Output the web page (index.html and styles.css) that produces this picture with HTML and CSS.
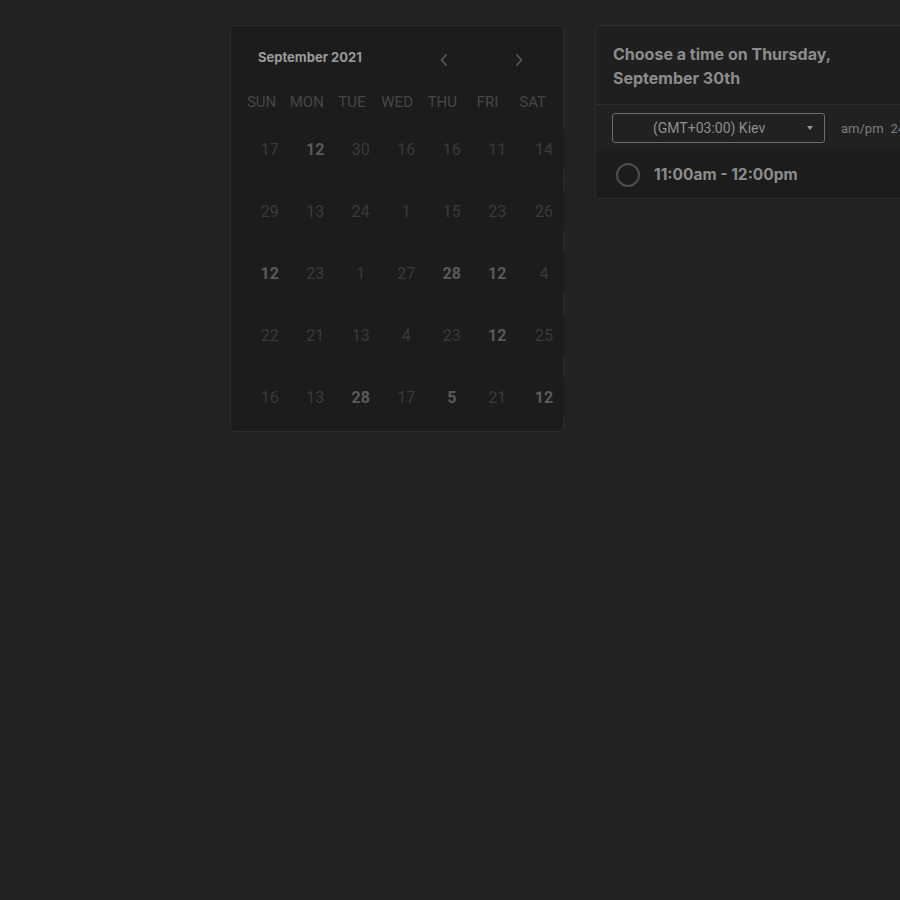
FILE: index.html
```html
<!DOCTYPE html>
<html>
<head>
<meta charset="utf-8">
<link rel="stylesheet" href="styles.css">
</head>
<body>
<div class="page">
  <div class="calendar">
    <div class="cal-head">
      <span class="month">September 2021</span>
      <span class="nav prev"><svg width="10" height="14" viewBox="0 0 10 14"><path d="M7.5 1.5 L2.5 7 L7.5 12.5" fill="none" stroke="#5a5a5a" stroke-width="1.6"/></svg></span>
      <span class="nav next"><svg width="10" height="14" viewBox="0 0 10 14"><path d="M2.5 1.5 L7.5 7 L2.5 12.5" fill="none" stroke="#5a5a5a" stroke-width="1.6"/></svg></span>
    </div>
    <div class="dow">
      <span>SUN</span><span>MON</span><span>TUE</span><span>WED</span><span>THU</span><span>FRI</span><span>SAT</span>
    </div>
    <div class="dates">
      <span>17</span><span class="b">12</span><span>30</span><span>16</span><span>16</span><span>11</span><span>14</span>
      <span>29</span><span>13</span><span>24</span><span>1</span><span>15</span><span>23</span><span>26</span>
      <span class="b">12</span><span>23</span><span>1</span><span>27</span><span class="b">28</span><span class="b">12</span><span>4</span>
      <span>22</span><span>21</span><span>13</span><span>4</span><span>23</span><span class="b">12</span><span>25</span>
      <span>16</span><span>13</span><span class="b">28</span><span>17</span><span class="b">5</span><span>21</span><span class="b">12</span>
    </div>
  </div>
  <div class="times">
    <div class="times-head"><div class="title">Choose a time on Thursday, September 30th</div></div>
    <div class="controls">
      <div class="select"><span class="select-text">(GMT+03:00) Kiev</span><span class="caret"></span></div>
      <span class="fmt">am/pm</span><span class="fmt">24hr</span>
    </div>
    <div class="slot">
      <span class="radio"></span>
      <span class="slot-text">11:00am - 12:00pm</span>
    </div>
  </div>
</div>
</body>
</html>
```
FILE: styles.css
```css
html, body {
  margin: 0;
  padding: 0;
  background: #222222;
  overflow: hidden;
}
.page {
  display: flex;
  align-items: flex-start;
  gap: 31px;
  padding: 25px 0 0 230px;
  width: 1200px;
}
.calendar {
  width: 332px;
  height: 405px;
  background: #1c1c1c;
  border: 1px solid #2d2d2d;
  border-radius: 4px;
  flex-shrink: 0;
}
.cal-head {
  display: flex;
  align-items: center;
  height: 20px;
  margin-top: 24px;
  padding-left: 27px;
}
.month {
  font-family: Inter, "Liberation Sans", sans-serif;
  font-weight: 700;
  font-size: 13px;
  color: #9a9a9a;
  width: 181px;
  position: relative;
  top: -3px;
}
.nav {
  display: flex;
  width: 10px;
  height: 14px;
}
.nav.next {
  margin-left: 65px;
}
.dow {
  display: grid;
  grid-template-columns: repeat(7, 45.2px);
  margin: 22px 0 0 8px;
  height: 20px;
  align-items: center;
}
.dow span {
  text-align: center;
  font-family: Roboto, "Liberation Sans", sans-serif;
  font-size: 15px;
  color: #464646;
}
.dates {
  display: grid;
  grid-template-columns: repeat(6, 45.5px) 44px;
  grid-auto-rows: 40px;
  row-gap: 22px;
  margin: 17px 0 0 16px;
  width: 317px;
}
.dates span {
  display: flex;
  align-items: center;
  justify-content: center;
  background: #1c1c1c;
  font-family: Roboto, "Liberation Sans", sans-serif;
  font-size: 16px;
  color: #3a3a3a;
}
.dates span:nth-child(7n) {
  padding-left: 4px;
}
.dates span.b {
  color: #5a5a5a;
  font-weight: 700;
}
.times {
  width: 360px;
  background: #1f1f1f;
  border: 1px solid #2d2d2d;
  border-radius: 4px;
  flex-shrink: 0;
}
.times-head {
  padding: 16px 17px 14px;
  border-bottom: 1px solid #2d2d2d;
}
.title {
  font-family: Inter, "Liberation Sans", sans-serif;
  font-weight: 700;
  font-size: 16px;
  line-height: 24px;
  color: #8c8c8c;
  max-width: 250px;
}
.controls {
  display: flex;
  align-items: center;
  height: 46px;
  padding-left: 16px;
  background: #212121;
}
.select {
  width: 211px;
  height: 28px;
  border: 1px solid #6e6e6e;
  border-radius: 3px;
  display: flex;
  align-items: center;
}
.select-text {
  font-family: Roboto, "Liberation Sans", sans-serif;
  font-size: 14px;
  color: #8e8e8e;
  margin-left: 40px;
  width: 154px;
}
.caret {
  width: 0;
  height: 0;
  border-left: 3.5px solid transparent;
  border-right: 3.5px solid transparent;
  border-top: 4px solid #9a9a9a;
}
.fmt {
  font-family: Roboto, "Liberation Sans", sans-serif;
  font-size: 13px;
  color: #7e7e7e;
  margin-left: 16px;
}
.fmt + .fmt {
  margin-left: 7px;
}
.slot {
  display: flex;
  align-items: center;
  height: 47px;
  padding-left: 20px;
  background: #1c1c1c;
}
.radio {
  width: 20px;
  height: 20px;
  border: 2px solid #4e4e4e;
  border-radius: 50%;
  flex-shrink: 0;
}
.slot-text {
  font-family: Inter, "Liberation Sans", sans-serif;
  font-weight: 700;
  font-size: 15.5px;
  color: #8c8c8c;
  margin-left: 14px;
}
```
